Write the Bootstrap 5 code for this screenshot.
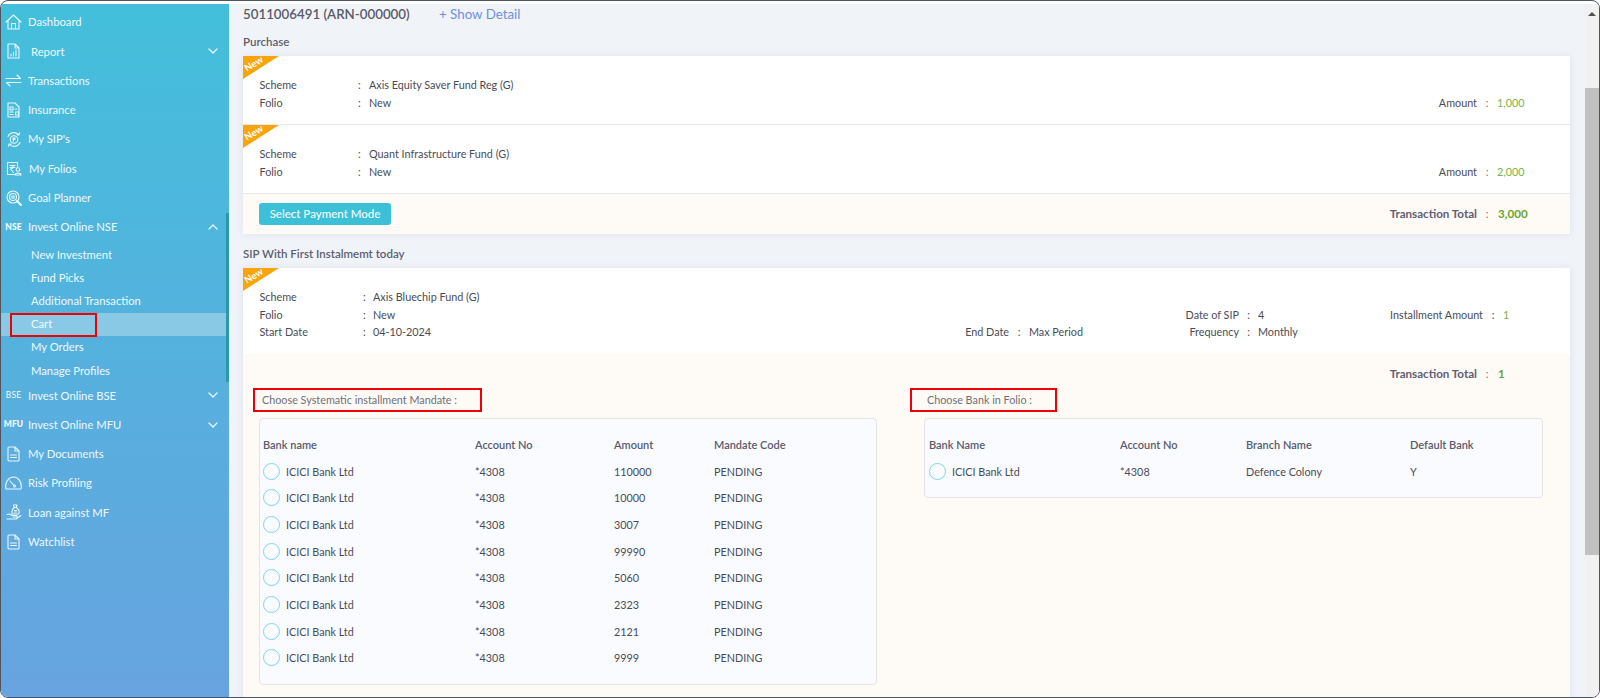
<!DOCTYPE html>
<html lang="en">
<head>
<meta charset="utf-8">
<title>Cart</title>
<link href="https://cdn.jsdelivr.net/npm/bootstrap@5.3.0/dist/css/bootstrap.min.css" rel="stylesheet">
<style>
html,body{height:698px;overflow:hidden;background:#fff;}
body{font-family:"Lato","Liberation Sans",sans-serif;font-size:10.8px;color:#4b4b58;line-height:17.5px;}
.app-frame{height:698px;border:1px solid #4d5560;border-radius:8px;padding-top:3px;overflow:hidden;background:#fff;}
.side-nav{width:228px;flex:none;background:linear-gradient(180deg,#43bfdb 0%,#67a3e0 100%);padding:3.5px 3px 0 0;position:relative;color:#eef9fd;}
.side-thumb{position:absolute;right:0;top:209px;width:3px;height:169px;background:#2a9aa8;}
.side-row{height:29.25px;display:flex;align-items:center;color:#eef9fd;text-decoration:none;font-size:11.25px;}
.side-ico{width:27px;flex:none;display:flex;justify-content:center;padding-left:3px;padding-right:5px;}
.side-ico svg{display:block;flex:none;fill:none;stroke:#e8f8fc;stroke-width:1.1;stroke-linecap:round;stroke-linejoin:round;}
.side-tag{font-size:8.5px;font-weight:900;letter-spacing:.1px;line-height:1;color:#f2fbff;}
.side-chev{margin-left:auto;margin-right:8px;fill:none;stroke:#e8f8fc;stroke-width:1.3;stroke-linecap:round;stroke-linejoin:round;}
.side-sub{height:23.2px;display:flex;align-items:center;padding-left:30px;padding-bottom:1.5px;color:#eef9fd;text-decoration:none;position:relative;font-size:11.25px;}
.side-sub-group{margin:2px 0 -2px;}
.side-sub.is-current{background:#8ac9e6;}
.mark-box{position:absolute;border:2px solid #ee0000;left:9px;top:0;width:87px;height:24px;}
.label-nudge-a{padding-left:3px;}
.label-nudge-b{padding-left:1px;}
.main-pane{flex:1 1 auto;min-width:0;background:#f0f3f8;padding:0 15px 0 14px;overflow:hidden;}
.acct-head{height:20px;line-height:20px;margin-bottom:9px;}
.acct-num{font-size:13.3px;font-weight:600;color:#5a5a68;width:196px;}
.acct-link{font-size:13.3px;color:#6d8fe2;text-decoration:none;}
.sect-title{height:18px;line-height:18px;margin-bottom:5px;font-weight:600;font-size:11.5px;color:#5e5e70;}
.cart-card{background:#fff;box-shadow:0 0 8px rgba(40,60,90,.08);position:relative;}
.tx-row{height:69px;padding:20px 0 0 16.5px;border-bottom:1px solid #e8e9ed;position:relative;}
.ribbon{position:absolute;left:0;top:0;width:36px;height:23px;background:#f9a40a;clip-path:polygon(0 0,100% 0,0 100%);}
.ribbon-text{position:absolute;left:1px;top:2px;font-size:9.5px;line-height:12px;color:#fff;font-weight:700;transform:rotate(-32deg);}
.field-lbl{width:98.5px;}
.field-sep{width:11px;}
.amt-lbl{margin-left:auto;color:#4b4b58;}
.amt-sep{width:20px;text-align:center;color:#77777f;}
.amt-val{width:73px;color:#7cb342;}
.tx-foot{height:40px;background:#fefaf5;padding-left:16px;display:flex;align-items:center;}
.pay-btn{--bs-btn-padding-y:0;--bs-btn-padding-x:0;--bs-btn-font-size:11.5px;--bs-btn-border-radius:3px;background:#3cc0d8;border:0;color:#f4fdff;height:22px;width:132px;line-height:22px;font-weight:500;white-space:nowrap;}
.pay-btn:hover{background:#3cc0d8;color:#f4fdff;}
.tot-lbl{margin-left:auto;font-weight:700;font-size:11.6px;color:#5e5e78;}
.tot-val{width:73px;font-weight:700;font-size:11.6px;color:#6aa52c;padding-left:1px;}
.sect-gap{margin-top:11px;}
.sip-top{height:86px;padding:20px 0 0 16.5px;position:relative;}
.sip-grid{display:grid;grid-template-columns:103.5px 10px 483px 153px 20px 210px 19px 62px 163px 20px 50px;}
.txt-end{text-align:right;}
.txt-mid{text-align:center;}
.green-val{color:#7cb342;}
.sip-bottom{background:#fefaf5;height:360px;padding-top:11px;}
.sip-total{height:23px;line-height:18px;}
.mandate-col{width:667px;flex:none;padding-left:10px;}
.bank-col{flex:1 1 auto;min-width:0;}
.choose-box{border:2px solid #ee0000;height:24px;line-height:20px;color:#70707c;padding-left:7px;}
.choose-left{width:229px;}
.choose-right{width:147px;padding-left:15px;}
.panel-box{background:#f9fbff;border:1px solid #e3e3e8;border-radius:4px;margin-top:6px;padding:17px 4px 12px;}
.panel-left{margin-left:6px;width:618px;padding-bottom:13px;padding-left:3px;}
.panel-right{margin-left:14px;width:619px;}
.bank-grid{--bs-table-bg:transparent;table-layout:fixed;margin:0;color:#4b4b58;font-size:10.8px;}
.bank-grid th{padding:0;height:22px;vertical-align:top;line-height:18px;font-weight:600;font-size:11px;color:#5a5a6e;}
.bank-grid td{padding:0;height:26.66px;vertical-align:middle;color:#4b4b58;line-height:17.5px;background:transparent;}
.pick-radio{width:17px;height:17px;margin:0 6px 0 0;vertical-align:middle;border:1.5px solid #7cd6ea;background-color:transparent;flex:none;}
.name-cell{display:flex;align-items:center;}
.cw-212{width:212px;}.cw-139{width:139px;}.cw-100{width:100px;}
.cw-191{width:191px;}.cw-126{width:126px;}.cw-164{width:164px;}
.fake-scroll{width:14px;flex:none;background:#f1f1f1;display:flex;flex-direction:column;align-items:center;}
.scroll-arrow{width:0;height:0;border-left:4px solid transparent;border-right:4px solid transparent;border-bottom:4px solid #505050;margin-top:8px;}
.scroll-thumb{width:100%;height:467px;background:#c1c1c1;margin-top:72px;}
</style>
</head>
<body>
<div class="app-frame d-flex">
  <nav class="side-nav">
    <div class="side-thumb"></div>
    <a class="side-row" href="#"><span class="side-ico"><svg width="17" height="16" viewBox="0 0 17 16"><path d="M1 8 8.5 1 16 8M3 6.5V15H14V6.5M6.5 15V9.5H10.500V15"/></svg></span>Dashboard</a>
    <a class="side-row" href="#"><span class="side-ico"><svg width="13" height="16" viewBox="0 0 13 16"><path d="M1 1H8L12 5V15H1ZM8 1V5H12M4 13V11M6.500 13V9M9 13V7"/></svg></span><span class="label-nudge-a">Report</span><svg class="side-chev" width="10" height="6" viewBox="0 0 10 6"><path d="M1 1 5 5 9 1"/></svg></a>
    <a class="side-row" href="#"><span class="side-ico"><svg width="17" height="13" viewBox="0 0 17 13"><path d="M1 4.500H15.500L12 1M16 8.500H1.500L5 12"/></svg></span>Transactions</a>
    <a class="side-row" href="#"><span class="side-ico"><svg width="13" height="16" viewBox="0 0 13 16"><path d="M1 1H8L12 5V15H1ZM3 5H6V8H3ZM8 7H10M3 10H6M3 12.500H6M8.500 10H11.500V13H8.500Z"/></svg></span>Insurance</a>
    <a class="side-row" href="#"><span class="side-ico"><svg width="16" height="15" viewBox="0 0 16 15"><path d="M2 4.500A6.500 6.500 0 0 1 13 3M14 10.500A6.500 6.500 0 0 1 3 12M13.500 .8 13 3 10.800 2.700M2.500 14.200 3 12 5.200 12.300"/><circle cx="8" cy="7.500" r="3.800"/><path d="M6.800 6H9.200M6.800 7.200H9.200M7 9.200 8.800 6.200"/></svg></span>My SIP's</a>
    <a class="side-row" href="#"><span class="side-ico"><svg width="16" height="15" viewBox="0 0 16 15"><path d="M8 13.500H1.500V1.500H11.500V6M4 4.500H9M4 6.500H9M6 4.500C7.500 4.500 7.500 8 4.500 8L7.500 11.500"/><circle cx="12" cy="8.500" r="1.800"/><path d="M9 14C9 11.500 15 11.500 15 14Z"/></svg></span><span class="label-nudge-b">My Folios</span></a>
    <a class="side-row" href="#"><span class="side-ico"><svg width="16" height="16" viewBox="0 0 16 16"><circle cx="7" cy="7" r="6"/><circle cx="7" cy="7" r="3.500"/><circle cx="7" cy="7" r="1.300"/><path d="M11 11 15 15" stroke-width="2"/></svg></span>Goal Planner</a>
    <a class="side-row" href="#"><span class="side-ico"><span class="side-tag">NSE</span></span>Invest Online NSE<svg class="side-chev" width="10" height="6" viewBox="0 0 10 6"><path d="M1 5 5 1 9 5"/></svg></a>
    <div class="side-sub-group">
      <a class="side-sub" href="#">New Investment</a>
      <a class="side-sub" href="#">Fund Picks</a>
      <a class="side-sub" href="#">Additional Transaction</a>
      <a class="side-sub is-current" href="#">Cart<span class="mark-box"></span></a>
      <a class="side-sub" href="#">My Orders</a>
      <a class="side-sub" href="#">Manage Profiles</a>
    </div>
    <a class="side-row" href="#"><span class="side-ico"><span class="side-tag fw-normal">BSE</span></span>Invest Online BSE<svg class="side-chev" width="10" height="6" viewBox="0 0 10 6"><path d="M1 1 5 5 9 1"/></svg></a>
    <a class="side-row" href="#"><span class="side-ico"><span class="side-tag">MFU</span></span>Invest Online MFU<svg class="side-chev" width="10" height="6" viewBox="0 0 10 6"><path d="M1 1 5 5 9 1"/></svg></a>
    <a class="side-row" href="#"><span class="side-ico"><svg width="13" height="16" viewBox="0 0 13 16"><path d="M2 1H8L12 5V14A1 1 0 0 1 11 15H2A1 1 0 0 1 1 14V2A1 1 0 0 1 2 1ZM8 1V5H12M3.500 9H9.500M3.500 11.500H9.500"/></svg></span>My Documents</a>
    <a class="side-row" href="#"><span class="side-ico"><svg width="17" height="14" viewBox="0 0 17 14"><path d="M1 13C-0.500 6 4 1 8.500 1S17.500 6 16 13ZM5 5 9 9.500"/><circle cx="9.500" cy="10" r="1"/></svg></span>Risk Profiling</a>
    <a class="side-row" href="#"><span class="side-ico"><svg width="16" height="16" viewBox="0 0 16 16"><path d="M7.500 1H11L10.300 3.500H8.200ZM8.200 3.500C6 5.500 5.500 8.500 6.500 10H12.500C14 8 13 5.500 10.300 3.500M8.500 6.500H10.500M8.500 8 10.500 8M1 10.500 3.500 10 6 11.500H10.500C11.500 11.500 11.500 13 10.500 13H7M1 15H10L15 11.500"/></svg></span>Loan against MF</a>
    <a class="side-row" href="#"><span class="side-ico"><svg width="13" height="16" viewBox="0 0 13 16"><path d="M2 1H8L12 5V14A1 1 0 0 1 11 15H2A1 1 0 0 1 1 14V2A1 1 0 0 1 2 1ZM8 1V5H12M3.500 9H9.500M3.500 11.500H9.500"/></svg></span>Watchlist</a>
  </nav>

  <main class="main-pane">
    <div class="acct-head d-flex"><span class="acct-num">5011006491 (ARN-000000)</span><a class="acct-link" href="#">+ Show Detail</a></div>
    <div class="sect-title">Purchase</div>
    <section class="cart-card">
      <div class="tx-row">
        <span class="ribbon"></span><span class="ribbon-text">New</span>
        <div class="d-flex"><span class="field-lbl">Scheme</span><span class="field-sep">:</span><span>Axis Equity Saver Fund Reg (G)</span></div>
        <div class="d-flex"><span class="field-lbl">Folio</span><span class="field-sep">:</span><span>New</span><span class="amt-lbl">Amount</span><span class="amt-sep">:</span><span class="amt-val">1,000</span></div>
      </div>
      <div class="tx-row">
        <span class="ribbon"></span><span class="ribbon-text">New</span>
        <div class="d-flex"><span class="field-lbl">Scheme</span><span class="field-sep">:</span><span>Quant Infrastructure Fund (G)</span></div>
        <div class="d-flex"><span class="field-lbl">Folio</span><span class="field-sep">:</span><span>New</span><span class="amt-lbl">Amount</span><span class="amt-sep">:</span><span class="amt-val">2,000</span></div>
      </div>
      <div class="tx-foot">
        <button type="button" class="btn pay-btn">Select Payment Mode</button>
        <span class="tot-lbl">Transaction Total</span><span class="amt-sep">:</span><span class="tot-val">3,000</span>
      </div>
    </section>

    <div class="sect-title sect-gap">SIP With First Instalmemt today</div>
    <section class="cart-card">
      <div class="sip-top">
        <span class="ribbon"></span><span class="ribbon-text">New</span>
        <div class="sip-grid">
          <span>Scheme</span><span>:</span><span>Axis Bluechip Fund (G)</span><span></span><span></span><span></span><span></span><span></span><span></span><span></span><span></span>
          <span>Folio</span><span>:</span><span>New</span><span></span><span></span><span class="txt-end">Date of SIP</span><span class="txt-mid">:</span><span>4</span><span class="txt-end">Installment Amount</span><span class="txt-mid">:</span><span class="green-val">1</span>
          <span>Start Date</span><span>:</span><span>04-10-2024</span><span class="txt-end">End Date</span><span class="txt-mid">:</span><span class="d-flex justify-content-between"><span>Max Period</span><span>Frequency</span></span><span class="txt-mid">:</span><span>Monthly</span><span></span><span></span><span></span>
        </div>
      </div>
      <div class="sip-bottom">
        <div class="sip-total d-flex"><span class="tot-lbl">Transaction Total</span><span class="amt-sep">:</span><span class="tot-val">1</span></div>
        <div class="d-flex">
          <div class="mandate-col">
            <div class="choose-box choose-left">Choose Systematic installment Mandate :</div>
            <div class="panel-box panel-left">
              <table class="table table-borderless bank-grid">
                <colgroup><col class="cw-212"><col class="cw-139"><col class="cw-100"><col></colgroup>
                <thead><tr><th>Bank name</th><th>Account No</th><th>Amount</th><th>Mandate Code</th></tr></thead>
                <tbody>
                  <tr><td><span class="name-cell"><input class="form-check-input pick-radio" type="radio" name="m">ICICI Bank Ltd</span></td><td>*4308</td><td>110000</td><td>PENDING</td></tr>
                  <tr><td><span class="name-cell"><input class="form-check-input pick-radio" type="radio" name="m">ICICI Bank Ltd</span></td><td>*4308</td><td>10000</td><td>PENDING</td></tr>
                  <tr><td><span class="name-cell"><input class="form-check-input pick-radio" type="radio" name="m">ICICI Bank Ltd</span></td><td>*4308</td><td>3007</td><td>PENDING</td></tr>
                  <tr><td><span class="name-cell"><input class="form-check-input pick-radio" type="radio" name="m">ICICI Bank Ltd</span></td><td>*4308</td><td>99990</td><td>PENDING</td></tr>
                  <tr><td><span class="name-cell"><input class="form-check-input pick-radio" type="radio" name="m">ICICI Bank Ltd</span></td><td>*4308</td><td>5060</td><td>PENDING</td></tr>
                  <tr><td><span class="name-cell"><input class="form-check-input pick-radio" type="radio" name="m">ICICI Bank Ltd</span></td><td>*4308</td><td>2323</td><td>PENDING</td></tr>
                  <tr><td><span class="name-cell"><input class="form-check-input pick-radio" type="radio" name="m">ICICI Bank Ltd</span></td><td>*4308</td><td>2121</td><td>PENDING</td></tr>
                  <tr><td><span class="name-cell"><input class="form-check-input pick-radio" type="radio" name="m">ICICI Bank Ltd</span></td><td>*4308</td><td>9999</td><td>PENDING</td></tr>
                </tbody>
              </table>
            </div>
          </div>
          <div class="bank-col">
            <div class="choose-box choose-right">Choose Bank in Folio :</div>
            <div class="panel-box panel-right">
              <table class="table table-borderless bank-grid">
                <colgroup><col class="cw-191"><col class="cw-126"><col class="cw-164"><col></colgroup>
                <thead><tr><th>Bank Name</th><th>Account No</th><th>Branch Name</th><th>Default Bank</th></tr></thead>
                <tbody><tr><td><span class="name-cell"><input class="form-check-input pick-radio" type="radio" name="b">ICICI Bank Ltd</span></td><td>*4308</td><td>Defence Colony</td><td>Y</td></tr></tbody>
              </table>
            </div>
          </div>
        </div>
      </div>
    </section>
  </main>

  <aside class="fake-scroll"><span class="scroll-arrow"></span><span class="scroll-thumb"></span></aside>
</div>
<script src="https://cdn.jsdelivr.net/npm/bootstrap@5.3.0/dist/js/bootstrap.bundle.min.js"></script>
</body>
</html>
